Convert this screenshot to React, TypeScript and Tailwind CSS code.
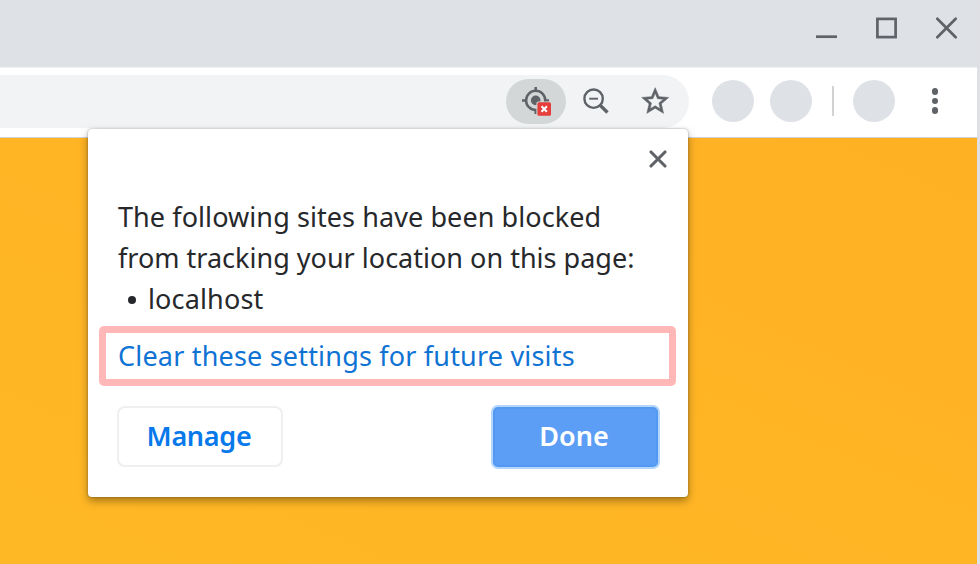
import React from "react";

function TitleBar() {
  return (
    <header className="flex h-[67px] shrink-0 bg-[#dee1e6] pl-[810px] text-[#5f6368]">
      <svg width="167" height="67" viewBox="0 0 167 67" fill="none" stroke="currentColor" strokeWidth="2.7">
        <path d="M6 36.7h21" />
        <rect x="67.4" y="18.9" width="18.2" height="18.2" />
        <path d="M127.3 18.8l18.4 18.4M145.7 18.8l-18.4 18.4" strokeLinecap="round" />
      </svg>
    </header>
  );
}

function LocationBlockedIcon() {
  return (
    <svg width="32" height="32" viewBox="0 0 32 32">
      <circle cx="15.7" cy="15.4" r="9.6" fill="none" stroke="#5f6368" strokeWidth="2.5" />
      <circle cx="15.7" cy="15.4" r="4.8" fill="#5f6368" />
      <path d="M15.7 2v4M15.7 25v4M2 15.4h4M25 15.4h4" stroke="#5f6368" strokeWidth="2.5" />
      <rect x="16.4" y="16.4" width="16" height="16" rx="2" fill="#d4d7d7" />
      <rect x="17.4" y="17.2" width="13.6" height="13.6" rx="1.6" fill="#e53e3b" />
      <path d="M21.5 21.3l5.4 5.4M26.9 21.3l-5.4 5.4" stroke="#fff" strokeWidth="2.1" />
    </svg>
  );
}

function Toolbar() {
  return (
    <div className="flex h-[71px] shrink-0 items-center border-t border-b border-t-[#f1f2f4] border-b-[#cfd1d6] bg-white pb-[3px]">
      <div className="flex h-[53px] w-[689px] items-center rounded-r-full bg-[#f1f3f4] pl-[506px]">
        <div className="flex h-[45px] w-[60px] items-center justify-center rounded-full bg-[#d4d7d7]">
          <LocationBlockedIcon />
        </div>
        <svg className="ml-[15px]" width="30" height="30" viewBox="0 0 30 30" fill="none" stroke="#5f6368">
          <circle cx="12.6" cy="12.7" r="9.2" strokeWidth="2.4" />
          <path d="M8.2 12.7h8.8" strokeWidth="1.9" />
          <path d="M18.9 19l7.6 7.5" strokeWidth="3.3" />
        </svg>
        <svg className="ml-[28.4px]" width="32.4" height="32.4" viewBox="0 0 24 24" fill="#5f6368" stroke="#5f6368" strokeWidth="0.4">
          <path d="M22 9.24l-7.19-.62L12 2 9.19 8.63 2 9.24l5.46 4.73L5.82 21 12 17.27 18.18 21l-1.63-7.03L22 9.24zM12 15.4l-3.76 2.27 1-4.28-3.32-2.88 4.38-.38L12 6.1l1.71 4.04 4.38.38-3.32 2.88 1 4.28L12 15.4z" />
        </svg>
      </div>
      <div className="ml-[23px] size-[42px] rounded-full bg-[#dee1e6]" />
      <div className="ml-4 size-[42px] rounded-full bg-[#dee1e6]" />
      <div className="ml-5 h-[30px] w-[2px] bg-[#d1d2d4]" />
      <div className="ml-[19px] size-[42px] rounded-full bg-[#dee1e6]" />
      <div className="ml-[37px] flex flex-col gap-[3.3px]">
        <span className="size-[6.2px] rounded-full bg-[#5f6368]" />
        <span className="size-[6.2px] rounded-full bg-[#5f6368]" />
        <span className="size-[6.2px] rounded-full bg-[#5f6368]" />
      </div>
    </div>
  );
}

function LocationDialog() {
  return (
    <section className="absolute top-[129px] left-[87.5px] flex h-[367.5px] w-[600px] flex-col rounded-[4px] bg-white text-[27px] leading-[41px] text-[#26282b] shadow-[0_0_2px_rgba(60,60,60,0.5),0_4px_9px_rgba(0,0,0,0.35)]">
      <div className="flex justify-end pt-[21px] pr-[21px]">
        <svg width="18" height="18" viewBox="0 0 18 18" stroke="#5f6368" strokeWidth="3.1" strokeLinecap="round">
          <path d="M2 2l14 14M16 2L2 16" />
        </svg>
      </div>
      <div className="mt-[28px] pl-[30.5px] whitespace-nowrap">
        <p className="tracking-[0.08px]">The following sites have been blocked</p>
        <p className="tracking-[0.01px]">from tracking your location on this page:</p>
        <ul>
          <li className="flex items-center">
            <span className="mt-[3px] mr-[12px] ml-[10px] size-2 rounded-full bg-[#26282b]" />
            <span className="tracking-[0.15px]">localhost</span>
          </li>
        </ul>
      </div>
      <div className="mt-[7px] ml-[11.5px] flex h-[60px] w-[577px] items-center rounded-[5px] bg-[#ffb7b8] p-[7px]">
        <a className="flex h-full w-full items-center bg-white pb-[2px] pl-[12px] tracking-[0.19px] whitespace-nowrap text-[#0f73d4]">
          Clear these settings for future visits
        </a>
      </div>
      <div className="mt-[18.5px] flex items-center justify-between pr-[28px] pl-[29.5px] font-semibold">
        <button className="flex h-[61px] w-[166px] items-center justify-center rounded-[8px] border-2 border-[#eeeff0] pr-[2px] pb-[2px] tracking-[-0.3px] text-[#0879ea]">
          Manage
        </button>
        <button className="flex h-[64px] w-[169px] items-center justify-center rounded-[7px] border-2 border-[#b5d5fb] bg-[#5c9ef5] pr-[2px] pb-[2px] text-white shadow-[inset_0_0_0_2px_#5199f3]">
          Done
        </button>
      </div>
    </section>
  );
}

export default function App() {
  return (
    <div className="relative flex h-[564px] w-[980px] overflow-hidden bg-[#dee0e6] font-['Noto_Sans',sans-serif]">
      <main className="flex w-[977px] flex-col">
        <TitleBar />
        <Toolbar />
        <div className="flex-1 bg-linear-to-tr from-[#ffb825] to-[#ffb124]" />
      </main>
      <LocationDialog />
    </div>
  );
}
